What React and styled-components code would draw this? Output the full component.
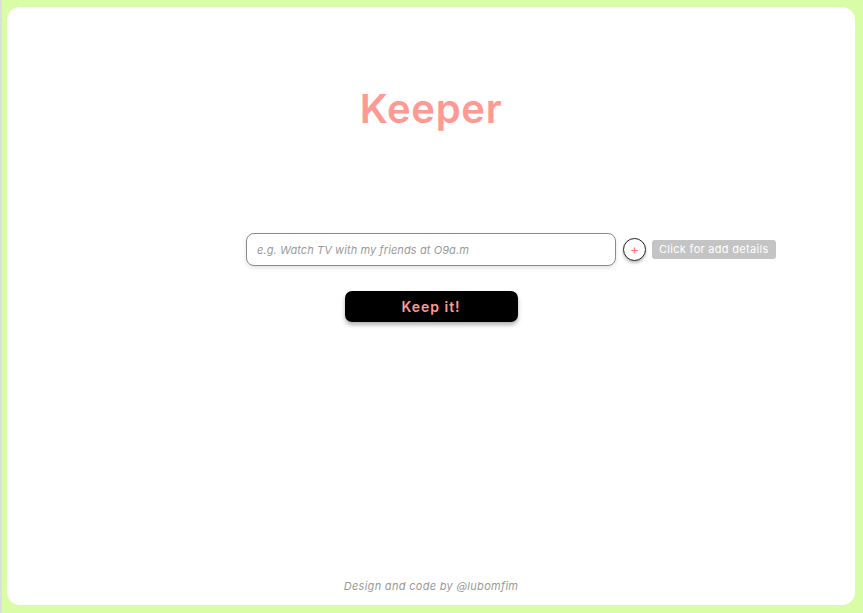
import styled, { createGlobalStyle } from 'styled-components';

const GlobalStyle = createGlobalStyle`
  html, body {
    margin: 0;
    padding: 0;
  }
  body {
    background: #d9fda6;
    font-family: 'Inter', 'DejaVu Sans', sans-serif;
  }
`;

const App = () => {
  return (
    <>
      <GlobalStyle />
      <Page className='Page'>
        <Card className='Card'>
          {/* Title */}
          <Title>Keeper</Title>

          {/* Note input */}
          <InputRow className='InputRow'>
            <span />
            <NoteInput type='text' placeholder='e.g. Watch TV with my friends at O9a.m' />
            <Extras className='Extras'>
              <PlusButton aria-label='add details'>+</PlusButton>
              <Hint>Click for add details</Hint>
            </Extras>
          </InputRow>

          {/* Submit */}
          <KeepButton>Keep it!</KeepButton>

          {/* Footer */}
          <Footer>Design and code by @lubomfim</Footer>
        </Card>
      </Page>
    </>
  );
};
export default App;

const Page = styled.div`
  box-sizing: border-box;
  height: 613px;
  padding: 7px 8px 8px 7px;
  box-shadow: inset 2px 0 0 #dedede;
`;

const Card = styled.main`
  box-sizing: border-box;
  height: 100%;
  background: #fff;
  border-radius: 13px;
  display: flex;
  flex-direction: column;
  align-items: center;
  padding-top: 78px;
`;

const Title = styled.h1`
  margin: 0;
  font-size: 40px;
  line-height: 48px;
  font-weight: 600;
  letter-spacing: 0.7px;
  color: #ff9993;
`;

const InputRow = styled.div`
  width: 100%;
  margin-top: 100px;
  display: grid;
  grid-template-columns: 1fr 370px 1fr;
  align-items: center;
`;

const NoteInput = styled.input`
  box-sizing: border-box;
  width: 370px;
  height: 33px;
  border: 1px solid #8a8a8a;
  border-radius: 8px;
  padding: 0 10px;
  box-shadow: 0 2px 4px rgba(0, 0, 0, 0.12);
  font-family: 'Inter', sans-serif;
  font-size: 11px;
  outline: none;

  &::placeholder {
    color: #9a9a9a;
    font-style: italic;
    letter-spacing: 0.1px;
  }
`;

const Extras = styled.div`
  display: flex;
  align-items: center;
  gap: 6px;
  padding-left: 7px;
`;

const PlusButton = styled.button`
  box-sizing: border-box;
  width: 23px;
  height: 23px;
  border-radius: 50%;
  border: 1px solid #222;
  background: #fff;
  color: #ff6f6f;
  font-size: 13px;
  line-height: 1;
  padding: 0 0 1px;
  box-shadow: 0 2px 3px rgba(0, 0, 0, 0.25);
  font-family: 'Inter', sans-serif;
`;

const Hint = styled.span`
  background: #c4c4c4;
  color: #fff;
  font-size: 11px;
  letter-spacing: 0.3px;
  line-height: 19px;
  padding: 0 7px;
  border-radius: 3px;
  white-space: nowrap;
`;

const KeepButton = styled.button`
  margin-top: 25px;
  width: 173px;
  height: 31px;
  border: none;
  border-radius: 7px;
  background: #000;
  color: #ff9993;
  font-family: 'Inter', sans-serif;
  font-size: 14px;
  font-weight: 600;
  letter-spacing: 1px;
  box-shadow: 0 3px 4px rgba(0, 0, 0, 0.3);
`;

const Footer = styled.footer`
  margin-top: auto;
  padding-bottom: 11px;
  font-size: 11px;
  line-height: 16px;
  font-style: italic;
  letter-spacing: 0.3px;
  color: #999;
`;
